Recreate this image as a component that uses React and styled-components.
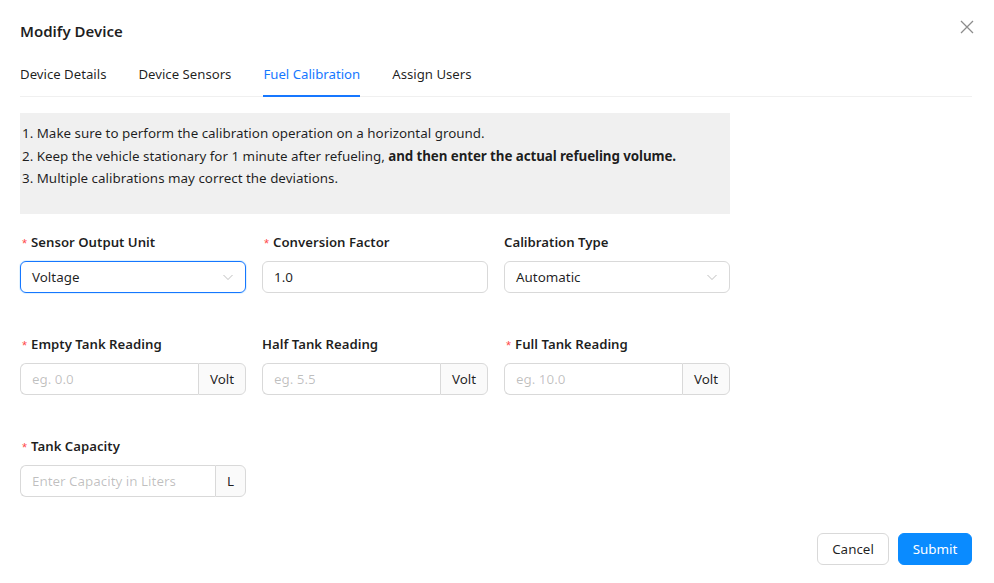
import React from "react";
import styled, { createGlobalStyle } from "styled-components";

const Global = createGlobalStyle`
  html, body { margin: 0; padding: 0; background: #fff; }
  body { font-family: "Segoe UI", "Noto Sans", Roboto, "Liberation Sans", sans-serif; color: rgba(0,0,0,0.88); }
  * { box-sizing: border-box; }
`;

const Modal = styled.div`
  width: 994px;
  height: 583px;
  padding: 20px 22px 18px 20px;
  display: flex;
  flex-direction: column;
  position: relative;
`;

const Title = styled.h2`
  margin: 0;
  font-size: 15px;
  font-weight: 600;
  line-height: 22px;
  color: rgba(0,0,0,0.88);
`;

const Close = styled.button`
  position: absolute;
  top: 18px;
  right: 18px;
  width: 18px;
  height: 18px;
  border: 0;
  background: none;
  padding: 0;
  display: flex;
  align-items: center;
  justify-content: center;
`;

const Tabs = styled.div`
  margin-top: 20px;
  display: flex;
  gap: 32px;
  border-bottom: 1px solid #f0f0f0;
`;

const Tab = styled.div`
  font-size: 13.2px;
  line-height: 22px;
  padding: 1px 0 11px;
  color: ${p => (p.$active ? "#1677ff" : "rgba(0,0,0,0.88)")};
  position: relative;
  &::after {
    content: "";
    position: absolute;
    left: 0; right: 0; bottom: -1px;
    height: 2px;
    background: ${p => (p.$active ? "#1677ff" : "transparent")};
  }
`;

const Info = styled.div`
  margin-top: 16px;
  width: 710px;
  height: 101px;
  background: #f0f0f0;
  padding: 9px 2px;
  font-size: 13.4px;
  line-height: 22.5px;
`;

const Bold = styled.b`
  font-weight: 700;
  letter-spacing: -0.1px;
`;

const Grid = styled.div`
  margin-top: 17px;
  display: grid;
  grid-template-columns: repeat(3, 226px);
  column-gap: 16px;
  row-gap: 40px;
`;

const Field = styled.div`
  display: flex;
  flex-direction: column;
  gap: 8px;
`;

const Label = styled.label`
  font-size: 13.2px;
  font-weight: 600;
  height: 22px;
  line-height: 22px;
  display: flex;
  align-items: center;
  &::before {
    content: ${p => (p.$required ? '"*"' : "none")};
    display: inline-block;
    line-height: 1;
    color: #ff4d4f;
    font-family: SimSun, "Liberation Sans", sans-serif;
    font-weight: 400;
    font-size: 13px;
    margin: 3px 4px 0 2px;
  }
`;

const Box = styled.div`
  height: 32px;
  border: 1px solid ${p => (p.$focused ? "#1677ff" : "#d9d9d9")};
  box-shadow: ${p => (p.$focused ? "0 0 0 1px rgba(5,145,255,0.12)" : "none")};
  border-radius: 6px;
  display: flex;
  align-items: center;
  padding: 0 11px;
  font-size: 13.4px;
  justify-content: space-between;
  background: #fff;
`;

const Group = styled.div`
  display: flex;
  height: 32px;
  width: ${p => p.$width || "226px"};
`;

const GroupInput = styled.div`
  flex: 1;
  border: 1px solid #d9d9d9;
  border-right: 0;
  border-radius: 6px 0 0 6px;
  display: flex;
  align-items: center;
  padding: 0 11px;
  font-size: 13.4px;
  color: rgba(0,0,0,0.25);
`;

const Addon = styled.div`
  width: ${p => p.$w};
  border: 1px solid #d9d9d9;
  border-radius: 0 6px 6px 0;
  background: rgba(0,0,0,0.02);
  display: flex;
  align-items: center;
  justify-content: center;
  font-size: 13.4px;
`;

const Footer = styled.div`
  margin-top: auto;
  display: flex;
  justify-content: flex-end;
  gap: 9px;
`;

const Button = styled.button`
  height: 32px;
  width: ${p => p.$w};
  padding: 0;
  border-radius: 6px;
  font-family: inherit;
  font-size: 13.4px;
  border: 1px solid ${p => (p.$primary ? "#0a8bff" : "#d9d9d9")};
  background: ${p => (p.$primary ? "#0a8bff" : "#fff")};
  color: ${p => (p.$primary ? "#fff" : "rgba(0,0,0,0.88)")};
`;

const Chevron = () => (
  <svg width="12" height="12" viewBox="0 0 12 12" fill="none">
    <path d="M1.5 4l4.5 4.5L10.5 4" stroke="rgba(0,0,0,0.25)" strokeWidth="1" />
  </svg>
);

const Unit = ({ placeholder, unit, w = "48px", width }) => (
  <Group $width={width}>
    <GroupInput>{placeholder}</GroupInput>
    <Addon $w={w}>{unit}</Addon>
  </Group>
);

export default function App() {
  return (
    <>
      <Global />
      <Modal>
        <Title>Modify Device</Title>
        <Close aria-label="close">
          <svg width="14" height="14" viewBox="0 0 14 14">
            <path d="M1 1l12 12M13 1L1 13" stroke="rgba(0,0,0,0.45)" strokeWidth="1.3" />
          </svg>
        </Close>
        <Tabs>
          <Tab>Device Details</Tab>
          <Tab>Device Sensors</Tab>
          <Tab $active>Fuel Calibration</Tab>
          <Tab>Assign Users</Tab>
        </Tabs>
        <Info>
          <div>1. Make sure to perform the calibration operation on a horizontal ground.</div>
          <div>
            2. Keep the vehicle stationary for 1 minute after refueling,{" "}
            <Bold>and then enter the actual refueling volume.</Bold>
          </div>
          <div>3. Multiple calibrations may correct the deviations.</div>
        </Info>
        <Grid>
          <Field>
            <Label $required>Sensor Output Unit</Label>
            <Box $focused>
              Voltage
              <Chevron />
            </Box>
          </Field>
          <Field>
            <Label $required>Conversion Factor</Label>
            <Box>1.0</Box>
          </Field>
          <Field>
            <Label>Calibration Type</Label>
            <Box>
              Automatic
              <Chevron />
            </Box>
          </Field>
          <Field>
            <Label $required>Empty Tank Reading</Label>
            <Unit placeholder="eg. 0.0" unit="Volt" />
          </Field>
          <Field>
            <Label>Half Tank Reading</Label>
            <Unit placeholder="eg. 5.5" unit="Volt" />
          </Field>
          <Field>
            <Label $required>Full Tank Reading</Label>
            <Unit placeholder="eg. 10.0" unit="Volt" />
          </Field>
          <Field>
            <Label $required>Tank Capacity</Label>
            <Unit placeholder="Enter Capacity in Liters" unit="L" w="31px" />
          </Field>
        </Grid>
        <Footer>
          <Button $w="72px">Cancel</Button>
          <Button $primary $w="74px">Submit</Button>
        </Footer>
      </Modal>
    </>
  );
}
